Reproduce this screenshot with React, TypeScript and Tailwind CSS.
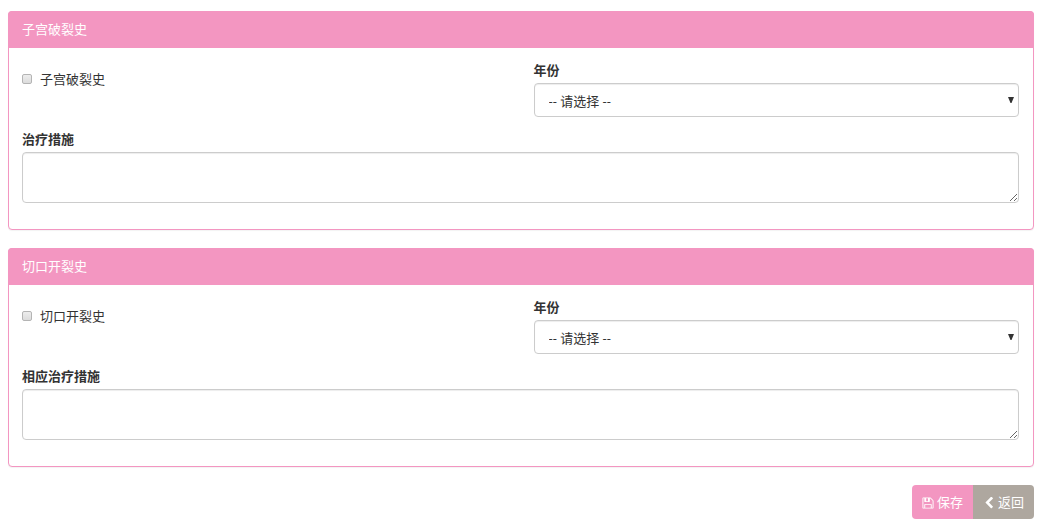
import React, { useId } from "react";

type SectionProps = { title: string; treatmentLabel: string };

function HistorySection({ title, treatmentLabel }: SectionProps) {
  const id = useId();
  return (
    <section className="rounded border border-[#f396c1] bg-white shadow-[0_1px_1px_rgba(0,0,0,0.05)]">
      <h2 className="-mx-px -mt-px rounded-t bg-[#f396c1] px-3.5 py-[9px] text-[13px] leading-[19px] text-white">
        {title}
      </h2>
      <div className="pt-[13px] pr-3.5 pb-[26px] pl-[13px]">
        <div className="grid grid-cols-2 gap-x-[26px]">
          <label className="mt-[9px] flex h-[18px] items-center gap-2 leading-[18px]">
            <input
              type="checkbox"
              className="size-2.5 appearance-none rounded-[2px] border border-[#b4b4b4] bg-linear-to-b from-[#ededed] to-[#dcdcdc] checked:bg-[#f396c1]"
            />
            {title}
          </label>
          <div>
            <label htmlFor={`${id}-year`} className="mb-1 block leading-[18px] font-bold">
              年份
            </label>
            <div className="relative">
              <select
                id={`${id}-year`}
                className="block h-[34px] w-full appearance-none rounded border border-[#ccc] bg-white pt-1 pr-6 pl-3.5 text-[13px] text-[#333] shadow-[inset_0_1px_1px_rgba(0,0,0,0.075)]"
              >
                <option>-- 请选择 --</option>
              </select>
              <svg
                viewBox="0 0 6 6"
                className="pointer-events-none absolute top-3.5 right-[5px] size-1.5 fill-[#333]"
                aria-hidden="true"
              >
                <path d="M0 0h6L3.5 6h-1z" />
              </svg>
            </div>
          </div>
        </div>
        <label htmlFor={`${id}-treatment`} className="mt-[13px] mb-1 block leading-[18px] font-bold">
          {treatmentLabel}
        </label>
        <textarea
          id={`${id}-treatment`}
          className="block h-[51px] w-full rounded border border-[#ccc] bg-white px-3 py-1.5 shadow-[inset_0_1px_1px_rgba(0,0,0,0.075)]"
        />
      </div>
    </section>
  );
}

export default function App() {
  return (
    <main className="flex flex-col gap-[18px] pt-[11px] pr-[19px] pb-2 pl-2 font-['Open_Sans','Noto_Sans_CJK_SC',sans-serif] text-[13px] text-[#333]">
      <HistorySection title="子宫破裂史" treatmentLabel="治疗措施" />
      <HistorySection title="切口开裂史" treatmentLabel="相应治疗措施" />
      <div className="flex justify-end text-white">
        <button
          type="button"
          className="flex h-[34px] items-center gap-[3px] rounded-l bg-[#f396c1] px-2.5 pt-0.5"
        >
          <svg viewBox="0 0 1792 1792" className="size-3 fill-current" aria-hidden="true">
            <path d="M512 1536h768v-384h-768v384zM1408 1536h128v-896q0-14-10-38.5t-20-34.5l-281-281q-10-10-34-20t-39-10v416q0 40-28 68t-68 28h-576q-40 0-68-28t-28-68v-416h-128v1280h128v-416q0-40 28-68t68-28h832q40 0 68 28t28 68v416zM896 608v-320q0-13-9.5-22.5t-22.5-9.5h-192q-13 0-22.5 9.5t-9.5 22.5v320q0 13 9.5 22.5t22.5 9.5h192q13 0 22.5-9.5t9.5-22.5zM1664 640v928q0 40-28 68t-68 28h-1344q-40 0-68-28t-28-68v-1344q0-40 28-68t68-28h928q40 0 88 20t76 48l280 280q28 28 48 76t20 88z" transform="translate(896 896) scale(1.08) translate(-896 -896)" />
          </svg>
          保存
        </button>
        <button
          type="button"
          className="flex h-[34px] items-center gap-[3px] rounded-r bg-[#aea79f] px-2.5 pt-0.5"
        >
          <svg viewBox="0 0 1792 1792" className="size-3 fill-current" aria-hidden="true">
            <path d="M1427 301l-531 531 531 531q19 19 19 45t-19 45l-166 166q-19 19-45 19t-45-19l-742-742q-19-19-19-45t19-45l742-742q19-19 45-19t45 19l166 166q19 19 19 45t-19 45z" transform="translate(896 896) scale(1.08) translate(-896 -896)" />
          </svg>
          返回
        </button>
      </div>
    </main>
  );
}
